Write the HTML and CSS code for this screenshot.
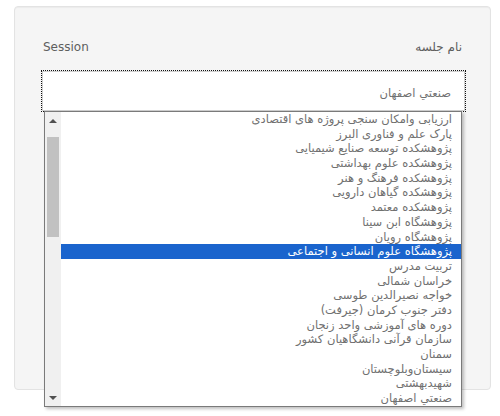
FILE: index.html
```html
<!DOCTYPE html>
<html lang="fa">
<head>
<meta charset="utf-8">
<link rel="stylesheet" href="styles.css">
</head>
<body>
<div class="well">
  <div class="label-row">
    <span class="label-en">Session</span>
    <span class="label-fa" dir="rtl">نام جلسه</span>
  </div>
  <div class="select-wrap">
    <div class="select" dir="rtl">صنعتي اصفهان</div>
    <div class="dropdown">
      <div class="scrollbar">
        <div class="sb-btn"><span class="arrow-up"></span></div>
        <div class="sb-track"><div class="sb-thumb"></div></div>
        <div class="sb-btn"><span class="arrow-down"></span></div>
      </div>
      <ul class="options" dir="rtl">
        <li>ارزیابی وامکان سنجی پروژه های اقتصادی</li>
        <li>پارک علم و فناوری البرز</li>
        <li>پژوهشکده توسعه صنایع شیمیایی</li>
        <li>پژوهشکده علوم بهداشتی</li>
        <li>پژوهشکده فرهنگ و هنر</li>
        <li>پژوهشکده گیاهان دارویی</li>
        <li>پژوهشکده معتمد</li>
        <li>پژوهشگاه ابن سینا</li>
        <li>پژوهشگاه رویان</li>
        <li class="selected">پژوهشگاه علوم انسانی و اجتماعی</li>
        <li>تربیت مدرس</li>
        <li>خراسان شمالی</li>
        <li>خواجه نصیرالدین طوسی</li>
        <li>دفتر جنوب کرمان (جیرفت)</li>
        <li>دوره های آموزشی واحد زنجان</li>
        <li>سازمان قرآنی دانشگاهیان کشور</li>
        <li>سمنان</li>
        <li>سیستان‌وبلوچستان</li>
        <li>شهیدبهشتی</li>
        <li>صنعتي اصفهان</li>
      </ul>
    </div>
  </div>
</div>
</body>
</html>
```
FILE: styles.css
```css
* { box-sizing: border-box; }
html, body { margin: 0; padding: 0; background: #fff; }
body {
  min-height: 416px;
  padding: 6px 9px 0 14px;
  font-family: "DejaVu Sans", "Noto Sans", sans-serif;
  font-size: 12px;
  color: #555;
}
.well {
  width: 477px;
  height: 384px;
  background: #f5f5f5;
  border: 1px solid #e3e3e3;
  border-radius: 4px;
  box-shadow: inset 0 1px 1px rgba(0,0,0,.04);
  padding: 30px 25px 0 27px;
}
.label-row {
  display: flex;
  justify-content: space-between;
  align-items: center;
  height: 20px;
  line-height: 20px;
  padding: 0 3px 0 1px;
  margin-bottom: 14px;
  color: #5e5e5e;
}
.label-en { font-size: 12px; }
.label-fa { font-size: 12px; }
.select-wrap { position: relative; }
.select {
  height: 40px;
  background: #fff;
  border: 1px solid #cfcfcf;
  outline: 1px dotted #111;
  padding: 11px 13px 0 13px;
  line-height: 20px;
  text-align: right;
  color: #707070;
  font-size: 11.5px;
}
.dropdown {
  position: absolute;
  left: 2px;
  top: 40px;
  width: 418px;
  height: 296px;
  background: #fff;
  border: 1px solid #7a7a7a;
  box-shadow: 2px 2px 3px rgba(0,0,0,.25);
  display: flex;
  overflow: hidden;
  z-index: 2;
}
.scrollbar {
  width: 16px;
  background: #f0f0f0;
  display: flex;
  flex-direction: column;
}
.sb-btn {
  height: 17px;
  display: flex;
  align-items: center;
  justify-content: center;
}
.arrow-up {
  width: 0; height: 0;
  border-left: 4px solid transparent;
  border-right: 4px solid transparent;
  border-bottom: 4px solid #505050;
}
.arrow-down {
  width: 0; height: 0;
  border-left: 4px solid transparent;
  border-right: 4px solid transparent;
  border-top: 4px solid #505050;
}
.sb-track { flex: 1; padding: 8px 2px 0 2px; }
.sb-thumb { height: 100px; background: #c1c1c1; }
.options {
  flex: 1;
  list-style: none;
  margin: 0;
  padding: 0;
  text-align: right;
}
.options li {
  height: 14.7px;
  line-height: 14.7px;
  padding-right: 9px;
  font-size: 11.5px;
  color: #707070;
  white-space: nowrap;
}
.options li.selected {
  background: #1a64cd;
  color: #fff;
}
```
